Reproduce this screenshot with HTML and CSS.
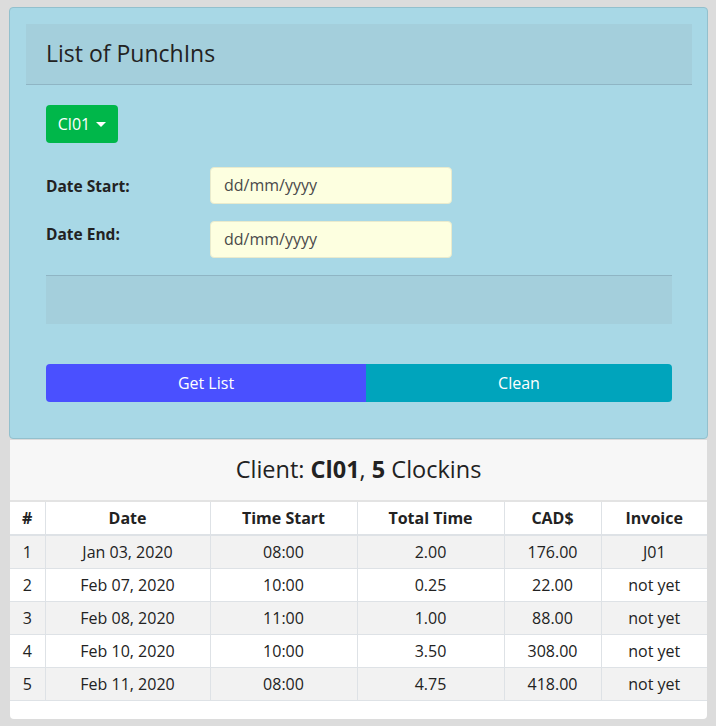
FILE: index.html
```html
<!DOCTYPE html>
<html>
<head>
<meta charset="utf-8">
<link rel="stylesheet" href="styles.css">
</head>
<body>
<div class="page">
  <div class="panel">
    <div class="panel-header">List of PunchIns</div>
    <div class="panel-body">
      <button class="btn-client">Cl01 <span class="caret"></span></button>
      <div class="form-row row-start">
        <label class="lbl">Date Start:</label>
        <div class="date-input">dd/mm/yyyy</div>
      </div>
      <div class="form-row row-end">
        <label class="lbl lbl-top">Date End:</label>
        <div class="date-input">dd/mm/yyyy</div>
      </div>
      <div class="msg-box"></div>
      <div class="actions">
        <button class="btn-get">Get List</button>
        <button class="btn-clean">Clean</button>
      </div>
    </div>
  </div>
  <div class="result">
    <div class="result-header">Client: <b>Cl01</b>, <b>5</b> Clockins</div>
    <table class="tbl">
      <thead>
        <tr><th class="c-n">#</th><th class="c-d">Date</th><th class="c-s">Time Start</th><th class="c-t">Total Time</th><th class="c-c">CAD$</th><th class="c-i">Invoice</th></tr>
      </thead>
      <tbody>
        <tr><td>1</td><td>Jan 03, 2020</td><td>08:00</td><td>2.00</td><td>176.00</td><td>J01</td></tr>
        <tr><td>2</td><td>Feb 07, 2020</td><td>10:00</td><td>0.25</td><td>22.00</td><td>not yet</td></tr>
        <tr><td>3</td><td>Feb 08, 2020</td><td>11:00</td><td>1.00</td><td>88.00</td><td>not yet</td></tr>
        <tr><td>4</td><td>Feb 10, 2020</td><td>10:00</td><td>3.50</td><td>308.00</td><td>not yet</td></tr>
        <tr><td>5</td><td>Feb 11, 2020</td><td>08:00</td><td>4.75</td><td>418.00</td><td>not yet</td></tr>
      </tbody>
    </table>
  </div>
</div>
</body>
</html>
```

FILE: styles.css
```css
* { box-sizing: border-box; }
html, body { margin: 0; padding: 0; background: #dcdcdc; }
body { font-family: "Open Sans", "Noto Sans", sans-serif; color: #212529; font-size: 16px; }
.page { padding: 7px 8px 8px 9px; width: 716px; }
.panel {
  background: #a8d8e6;
  border: 1px solid #93c0cd;
  border-radius: 4px;
  padding: 16px 15px 16px 16px;
}
.panel-header {
  background: #a4cfdc;
  border-bottom: 1px solid #8fb5c4;
  height: 61px;
  padding: 0 20px;
  font-size: 23px;
  line-height: 58px;
  color: #222;
}
.panel-body { padding: 20px 20px 20px 20px; }
.btn-client {
  background: #00b74a;
  color: #fff;
  border: none;
  border-radius: 4px;
  height: 38px;
  width: 72px;
  font-family: inherit;
  font-size: 16px;
  padding: 0;
  display: flex;
  align-items: center;
  justify-content: center;
  gap: 6px;
}
.caret {
  display: inline-block;
  width: 0; height: 0;
  border-left: 5px solid transparent;
  border-right: 5px solid transparent;
  border-top: 5px solid #fff;
}
.form-row { display: flex; }
.row-start { margin-top: 24px; align-items: center; }
.row-end { margin-top: 17px; align-items: flex-start; }
.lbl { width: 164px; font-weight: bold; font-size: 15.5px; color: #222; }
.lbl-top { padding-top: 2px; }
.date-input {
  width: 242px;
  height: 37px;
  background: #fdffe0;
  border: 1px solid #e9ebcd;
  border-radius: 4px;
  padding-left: 13px;
  line-height: 35px;
  color: #4a4a4a;
  font-size: 16px;
}
.msg-box {
  margin-top: 17px;
  height: 49px;
  background: #a4cfdc;
  border-top: 1px solid #8fb5c4;
}
.actions { display: flex; margin-top: 40px; }
.actions button {
  height: 38px;
  border: none;
  color: #fff;
  font-family: inherit;
  font-size: 16px;
  padding: 0;
}
.btn-get { width: 320px; background: #4a50ff; border-radius: 4px 0 0 4px; }
.btn-clean { flex: 1; background: #00a4bc; border-radius: 0 4px 4px 0; }
.result {
  margin: 1px 0 0 1px;
  width: 697px;
  background: #fff;
  border-radius: 0 0 4px 4px;
  padding-bottom: 18px;
}
.result-header {
  background: #f7f7f7;
  height: 62px;
  text-align: center;
  font-size: 23.5px;
  line-height: 58px;
  border-bottom: 2px solid #e3e3e3;
  color: #222;
}
.tbl { width: 100%; border-collapse: collapse; font-size: 16px; }
.tbl th, .tbl td {
  border-left: 1px solid #dee2e6;
  border-bottom: 1px solid #dee2e6;
  text-align: center;
  height: 33px;
  padding: 0;
  color: #222;
}
.tbl th:first-child, .tbl td:first-child { border-left: none; }
.tbl th { font-weight: bold; background: #fff; border-bottom: 2px solid #dee2e6; }
.tbl tbody tr:nth-child(odd) td { background: #f2f2f2; }
.c-n { width: 35px; }
.c-d { width: 165px; }
.c-s { width: 147px; }
.c-t { width: 147px; }
.c-c { width: 97px; }
.c-i { width: 106px; }
```
